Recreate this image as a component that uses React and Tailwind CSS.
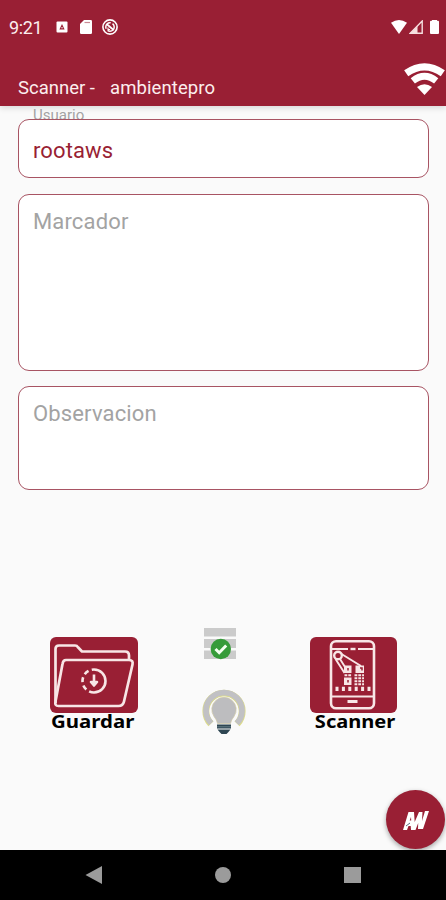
import React, { useState } from 'react';

function StatusBar() {
  return (
    <div className="h-[54px] flex items-center justify-between pl-[9px] pr-[7px]">
      <div className="flex items-center">
        <span className="w-[33px] pt-px text-[18px] leading-none tracking-[-0.4px]">9:21</span>
        <svg className="ml-[14px]" width="12" height="12" viewBox="0 0 12 12">
          <rect x="0.5" y="0.5" width="11" height="11" rx="1" fill="#fff" />
          <path d="M6 3 8.600 8.500H3.400Z" fill="#991f34" />
          <circle cx="6" cy="6.800" r="0.700" fill="#fff" />
        </svg>
        <svg className="ml-[12px]" width="12" height="14" viewBox="0 0 12 14">
          <path d="M4 0h6.8Q12 0 12 1.2v11.6Q12 14 10.8 14H1.2Q0 14 0 12.8V4Z" fill="#fff" />
          <path d="M4.500 2.500h5.500" stroke="#c98a94" strokeWidth="1.200" />
        </svg>
        <svg className="ml-[10px]" width="16" height="16" viewBox="0 0 16 16" fill="none" stroke="#fff">
          <circle cx="8" cy="8" r="7.1" strokeWidth="1.6" />
          <circle cx="8" cy="8" r="4.200" strokeWidth="1.5" strokeDasharray="9 2" />
          <path d="M4.600 5l7 6" strokeWidth="1.7" />
          <path d="M6 8.500v2h2" strokeWidth="1.1" />
        </svg>
      </div>
      <div className="flex items-center">
        <svg width="16" height="14" viewBox="0 0 16 14">
          <path d="M0 2.8Q8-2.8 16 2.8L8 14Z" fill="#fff" />
        </svg>
        <svg className="ml-[2px]" width="14" height="14" viewBox="0 0 14 14">
          <path d="M13.2 1v12.2H1.2Z" fill="none" stroke="#f6dfdf" strokeWidth="1.4" />
          <path d="M1 13.400 8.500 6v7.400Z" fill="#f6dfdf" />
        </svg>
        <svg className="ml-[7px]" width="9" height="14" viewBox="0 0 9 14">
          <path d="M2 0h5v0.800H8q1 0 1 1V13q0 1-1 1H1q-1 0-1-1V1.800q0-1 1-1h1Z" fill="#fff" />
        </svg>
      </div>
    </div>
  );
}

function WifiIcon() {
  return (
    <svg className="mt-[9px]" width="43" height="33" viewBox="0 0 43 33">
      <path d="M3.200 10.200Q21.500-2.500 39.800 10.200" fill="none" stroke="#fff" strokeWidth="7.200" />
      <path d="M9.800 17.800Q21.500 8.500 33.200 17.800" fill="none" stroke="#fff" strokeWidth="6.800" />
      <path d="M14 24Q21.500 18.500 29 24L21.500 32Z" fill="#fff" />
    </svg>
  );
}

function FolderIcon() {
  return (
    <svg width="88" height="76" viewBox="0 0 88 76" fill="none" stroke="#f8e6e6" strokeWidth="2.7" strokeLinejoin="round">
      <rect width="88" height="76" rx="6" fill="#991f34" stroke="none" />
      <path d="M5.500 66V12Q5.500 8.500 9 8.500h16q2 0 3 1.800l4 4.200h43q4 0 4 4v4" />
      <path d="M16 23h63q4.500 0 3.500 4.500l-8.500 37q-1 4.500-5.500 4.500H8.500q-4 0-3-4.500l7-37.500Q13 23 16 23Z" />
      <path d="M44 32.500a11.500 11.500 0 0 1 0 23" strokeWidth="2.600" />
      <path d="M44 55.500a11.500 11.500 0 0 1 0-23" strokeWidth="2.600" strokeDasharray="5 3.400" />
      <path d="M44 37.500v11M41 45l3 3.500 3-3.500Z" strokeWidth="2.600" />
    </svg>
  );
}

function PhoneScanIcon() {
  return (
    <svg width="87" height="76" viewBox="0 0 87 76" fill="none" stroke="#f8e6e6">
      <rect width="87" height="76" rx="6" fill="#991f34" stroke="none" />
      <rect x="21" y="4.300" width="43" height="67" rx="5" strokeWidth="2.600" />
      <path d="M22 12h16M48 12h16" strokeWidth="2" />
      <path d="M40.500 12h5" strokeWidth="2.400" />
      <path d="M22 59.500h42" strokeWidth="2.200" />
      <path d="M37.500 64.500h10" strokeWidth="3" />
      <circle cx="28" cy="18.500" r="3.800" strokeWidth="2.400" />
      <path d="M31.500 17 51 29M25.500 22l9 14M30 22l5 8" strokeWidth="1.900" />
      <g fill="#f8e6e6" stroke="none">
        <rect x="34" y="28.500" width="7.500" height="7.500" />
        <rect x="45.500" y="28.500" width="8.500" height="7.500" />
        <rect x="34" y="40.500" width="7.500" height="7.500" />
      </g>
      <path d="M38 31v2.500M50 31h2v2.500M38 43v2.500" stroke="#991f34" strokeWidth="1.500" />
      <path d="M34.500 38.200h7M44.500 38.200h9.500M44.500 41.200h9.500M44.500 44.200h9.500M44.500 47.200h9.500" strokeWidth="2" strokeDasharray="2.800 1" />
      <path d="M25.500 51.800h36" strokeWidth="4.200" strokeDasharray="3 3.400" />
    </svg>
  );
}

function ListCheckIcon() {
  return (
    <svg width="34" height="34" viewBox="0 0 34 34">
      <path d="M1 1h32v8.500H1ZM1 12h32v9H1ZM1 23.500h32v8.500H1Z" fill="#cbcbcb" />
      <circle cx="17.800" cy="22" r="10.200" fill="#369b39" />
      <path d="m12.500 22 3.700 3.700 7-7.200" fill="none" stroke="#f3fff0" strokeWidth="3" />
    </svg>
  );
}

function BulbIcon() {
  return (
    <svg width="44" height="46" viewBox="0 0 44 46">
      <path d="M9 34.700A18 18 0 1 1 35 34.700" fill="none" stroke="#dcdb8a" strokeWidth="7.200" />
      <path d="M9.200 34.200A18 18 0 1 1 34.800 34.200" fill="none" stroke="#c1c1c4" strokeWidth="5.800" />
      <circle cx="22" cy="22" r="14.600" fill="#fafafa" />
      <path d="M15.500 34.500Q15 31 12 27.500A12.200 12.200 0 1 1 32 27.500Q29 31 28.500 34.500Z" fill="#bdbdbf" stroke="#cfc7a5" strokeWidth="0.700" />
      <path d="M15 35.500h14v4H15ZM15.500 40.500h13l-2.500 3-1.500 1.500h-5L18 43.500Z" fill="#2e4652" />
      <path d="M15 37.800h14" stroke="#7d969d" strokeWidth="0.700" />
    </svg>
  );
}

function ActionButton({ label, labelClass, children }) {
  return (
    <button type="button" className="flex flex-col items-center">
      {children}
      <span className={`font-['Noto_Sans',sans-serif] font-bold text-[17px] leading-[17px] text-black origin-center ${labelClass}`}>
        {label}
      </span>
    </button>
  );
}

function NavBar() {
  return (
    <div className="h-[50px] bg-black flex items-center pl-[85px]">
      <svg width="17" height="18" viewBox="0 0 17 18">
        <path d="M0.500 9 17 0v18Z" fill="#9b9b9b" />
      </svg>
      <div className="ml-[113px] size-4 rounded-full bg-[#9b9b9b]" />
      <div className="ml-[113px] w-[17px] h-4 bg-[#9b9b9b]" />
    </div>
  );
}

function App() {
  const [marcador, setMarcador] = useState('');
  const [observacion, setObservacion] = useState('');

  const areaClass =
    'block w-[411px] resize-none outline-none rounded-[11px] border border-[#a85463] bg-white px-[14px] text-[22px] leading-[26px] tracking-[0.15px] text-[#991f34] placeholder:text-[#a3a3a3]';

  return (
    <div className="relative w-[446px] h-[900px] overflow-hidden flex flex-col bg-[#fafafa] font-[Roboto,sans-serif]">
      <header className="h-[106px] shrink-0 bg-[#991f34] text-[#fceeee] shadow-[0_2px_6px_rgba(0,0,0,0.14)]">
        <StatusBar />
        <div className="h-[52px] flex justify-between">
          <h1 className="flex pl-[18px] pt-[23px] text-[18.5px] leading-[22px]">
            <span className="w-[92px]">Scanner -</span>
            <span className="tracking-[0.1px]">ambientepro</span>
          </h1>
          <WifiIcon />
        </div>
      </header>

      <main className="flex-1 flex flex-col pl-[18px]">
        <label className="h-[13px] pl-[15px] text-[15px] leading-[19px] text-[#a3a3a3]" htmlFor="usuario">
          Usuario
        </label>
        <input
          id="usuario"
          className="w-[411px] h-[59px] shrink-0 outline-none rounded-[11px] border border-[#a85463] bg-white px-[14px] pt-[3px] text-[22px] tracking-[0.1px] text-[#991f34]"
          defaultValue="rootaws"
        />
        <textarea
          className={`${areaClass} mt-4 h-[177px] pt-[14px]`}
          placeholder="Marcador"
          value={marcador}
          onChange={(e) => setMarcador(e.target.value)}
        />
        <textarea
          className={`${areaClass} mt-[15px] h-[104px] pt-[14px]`}
          placeholder="Observacion"
          value={observacion}
          onChange={(e) => setObservacion(e.target.value)}
        />

        <div className="mt-[137px] pl-8 flex items-start">
          <div className="w-[88px] pt-[10px] flex justify-center">
            <ActionButton label="Guardar" labelClass="scale-x-[1.2] -ml-[3px]">
              <FolderIcon />
            </ActionButton>
          </div>
          <div className="ml-[64px] w-[44px] flex flex-col items-start gap-[28px]">
            <div className="pl-px">
              <ListCheckIcon />
            </div>
            <BulbIcon />
          </div>
          <div className="ml-[64px] w-[87px] pt-[10px] flex justify-center">
            <ActionButton label="Scanner" labelClass="scale-x-[1.18] ml-[3px]">
              <PhoneScanIcon />
            </ActionButton>
          </div>
        </div>
      </main>

      {/* floating button over the content */}
      <button
        type="button"
        className="absolute left-[386px] top-[790px] size-[59px] rounded-full bg-[#991f34] shadow-[0_2px_5px_rgba(0,0,0,0.35)] flex items-center justify-center"
      >
        <svg width="27" height="24" viewBox="0 0 27 24">
          <path d="m1 22 5.500-18H12l.7 10L17 4h3.500L20 13l3-10h4l-6 18h-5l.2-6-2.700 7H9l-.3-4H6.500L5 22Z" fill="#fff" />
          <path d="m7.700 12.500 1.300-3.500.2 3.500Z" fill="#991f34" />
          <path d="m4 18 4-3" stroke="#55677d" strokeWidth="1" />
        </svg>
      </button>

      <NavBar />
    </div>
  );
}

export default App;
